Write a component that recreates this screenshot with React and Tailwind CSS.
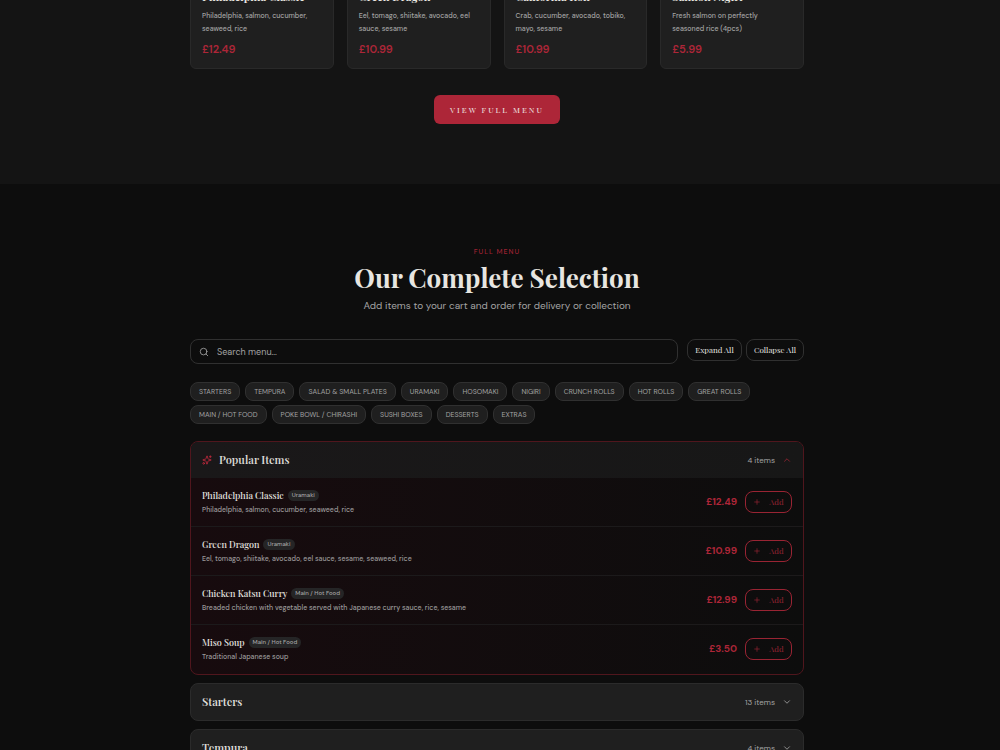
import { useState } from "react";
import { ChevronDown, ChevronUp, Plus, Search, Sparkles } from "lucide-react";

const featured = [
  { name: "Philadelphia Classic", text: "Philadelphia, salmon, cucumber, seaweed, rice", price: "£12.49" },
  { name: "Green Dragon", text: "Eel, tomago, shiitake, avocado, eel sauce, sesame", price: "£10.99" },
  { name: "California Roll", text: "Crab, cucumber, avocado, tobiko, mayo, sesame", price: "£10.99" },
  { name: "Salmon Nigiri", text: "Fresh salmon on perfectly seasoned rice (4pcs)", price: "£5.99" },
];

const categories = [
  "Starters", "Tempura", "Salad & Small Plates", "Uramaki", "Hosomaki", "Nigiri", "Crunch Rolls",
  "Hot Rolls", "Great Rolls", "Main / Hot Food", "Poke Bowl / Chirashi", "Sushi Boxes", "Desserts", "Extras",
];

const popular = [
  { name: "Philadelphia Classic", tag: "Uramaki", text: "Philadelphia, salmon, cucumber, seaweed, rice", price: "£12.49" },
  { name: "Green Dragon", tag: "Uramaki", text: "Eel, tomago, shiitake, avocado, eel sauce, sesame, seaweed, rice", price: "£10.99" },
  { name: "Chicken Katsu Curry", tag: "Main / Hot Food", text: "Breaded chicken with vegetable served with Japanese curry sauce, rice, sesame", price: "£12.99" },
  { name: "Miso Soup", tag: "Main / Hot Food", text: "Traditional Japanese soup", price: "£3.50" },
];

const serif = "font-['Playfair_Display','Liberation_Serif',serif]";

function FeaturedCard({ item }) {
  return (
    <article className="rounded-md border border-[#292929] bg-[#1f1f1f] px-[11px] pt-3 pb-[11px]">
      <h3 className={`${serif} text-[11px] leading-4 font-bold text-[#e8e6e1]`}>{item.name}</h3>
      <p className="mt-1 pr-1 text-[7px] leading-[13px] font-medium text-[#a3a3a3]">{item.text}</p>
      <p className="mt-[6px] text-[11px] leading-4 font-semibold text-[#ad2638]">{item.price}</p>
    </article>
  );
}

function MenuRow({ item }) {
  return (
    <li className="flex items-center border-t border-[#1c1a1b] px-[11px] py-[11px] first:border-t-0">
      <div className="flex-1">
        <div className="flex items-center gap-1">
          <h4 className={`${serif} text-[9px] leading-3 font-medium text-[#e8e6e1]`}>{item.name}</h4>
          <span className="rounded-full bg-[#252526] px-1 text-[6px] leading-[11px] font-medium text-[#a3a3a3]">{item.tag}</span>
        </div>
        <p className="mt-[3px] text-[7px] leading-[11px] font-medium text-[#9b999a]">{item.text}</p>
      </div>
      <span className="text-[10px] leading-4 font-bold text-[#ad2638]">{item.price}</span>
      <button type="button" aria-label={`Add ${item.name}`} className="ml-2 flex h-[22px] w-[47px] items-center justify-center gap-2 rounded-lg border border-[#992433] text-[#992433]">
        <Plus size={8} strokeWidth={2} />
        <span className={`${serif} text-[8px] leading-3`}>Add</span>
      </button>
    </li>
  );
}

function ClosedGroup({ name, count }) {
  return (
    <button type="button" aria-expanded="false" className="mt-2 flex h-[38px] w-full items-center rounded-lg border border-[#2b2b2b] bg-[#1f1f1f] px-[11px]">
      <span className={`${serif} text-[11px] font-semibold text-[#deddd9]`}>{name}</span>
      <span className="ml-auto text-[8px] text-[#a3a3a3]">{count} items</span>
      <ChevronDown size={10} className="ml-[7px] text-[#a3a3a3]" />
    </button>
  );
}

export default function App() {
  const [query, setQuery] = useState("");
  return (
    <div className="h-screen overflow-hidden bg-[#0d0d0d] font-['DM_Sans','Inter',sans-serif]">
      <section className="bg-[#141414] pr-[6px] pb-[60px]">
        <div className="mx-auto flex max-w-[614px] flex-col items-center">
          <div className="-mt-6 grid w-full grid-cols-4 gap-[13px]">
            {featured.map((item) => <FeaturedCard key={item.name} item={item} />)}
          </div>
          <button type="button" className={`${serif} mt-[26px] h-[29px] rounded-md bg-[#ad2638] px-4 text-[8px] tracking-[2px] text-[#f0e6e6]`}>VIEW FULL MENU</button>
        </div>
      </section>

      <section className="pt-[63px] pr-[6px]">
        <div className="mx-auto max-w-[614px]">
          <header className="text-center">
            <p className="text-[7px] leading-[10px] font-medium tracking-[1px] text-[#9c2232]">FULL MENU</p>
            <h2 className={`${serif} mt-[3px] text-[26px] leading-9 font-bold text-[#e8e6e1]`}>Our Complete Selection</h2>
            <p className="mt-[2px] text-[10px] leading-4 text-[#a3a3a3]">Add items to your cart and order for delivery or collection</p>
          </header>

          <div className="mt-[25px] flex items-start gap-[9px]">
            <label className="flex h-[25px] flex-1 items-center gap-2 rounded-lg border border-[#303030] px-2">
              <Search size={10} className="text-[#a3a3a3]" />
              <input type="text" aria-label="Search menu" placeholder="Search menu..." value={query} onChange={(e) => setQuery(e.target.value)} className="min-w-0 flex-1 bg-transparent text-[9px] leading-3 text-[#e8e6e1] outline-none placeholder:text-[#a3a3a3]" />
            </label>
            <div className={`${serif} flex gap-1 text-[8px] text-[#e8e6e1]`}>
              <button type="button" className="h-[22px] w-[55px] rounded-lg border border-[#303030]">Expand All</button>
              <button type="button" className="h-[22px] w-[58px] rounded-lg border border-[#303030]">Collapse All</button>
            </div>
          </div>

          <nav className="mt-[18px] flex flex-wrap gap-x-[5px] gap-y-1">
            {categories.map((name) => (
              <button key={name} type="button" className="h-[19px] rounded-lg border border-[#303030] bg-[#1f1f1f] px-2 text-[7px] leading-3 text-[#a3a3a3] uppercase">{name}</button>
            ))}
          </nav>

          <section className="mt-[17px] overflow-hidden rounded-lg border border-[#50161d] bg-linear-to-r from-[#170b0e] to-[#0d0d0d]">
            <button type="button" aria-expanded="true" className="flex h-9 w-full items-center bg-linear-to-r from-[#1a1819] to-[#171717] px-[11px]">
              <Sparkles size={10} className="text-[#c02a3e]" />
              <span className={`${serif} ml-[7px] text-[11px] font-semibold text-[#d9d7d3]`}>Popular Items</span>
              <span className="ml-auto text-[8px] text-[#a3a3a3]">4 items</span>
              <ChevronUp size={10} className="ml-[7px] text-[#992433]" />
            </button>
            <ul className="pb-px">
              {popular.map((item) => <MenuRow key={item.name} item={item} />)}
            </ul>
          </section>
          <ClosedGroup name="Starters" count={13} />
          <ClosedGroup name="Tempura" count={4} />
        </div>
      </section>
    </div>
  );
}
